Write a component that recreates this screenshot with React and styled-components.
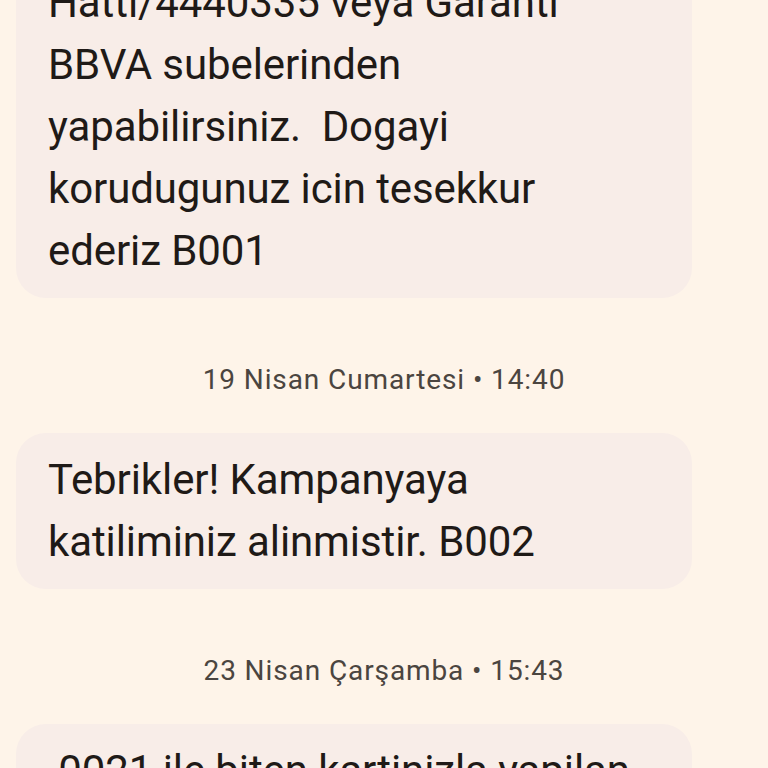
import React from "react";
import styled, { createGlobalStyle } from "styled-components";

const GlobalStyle = createGlobalStyle`
  html, body {
    margin: 0;
    padding: 0;
    background: #fef4e9;
    overflow: hidden;
  }
  body {
    font-family: Roboto, "Noto Sans", "Liberation Sans", sans-serif;
  }
`;

const Screen = styled.div`
  width: 768px;
  height: 768px;
  overflow: hidden;
  background: #fef4e9;
`;

const Thread = styled.div`
  display: flex;
  flex-direction: column;
  align-items: flex-start;
  padding: 0 16px;
  margin-top: ${(p) => p.$scroll}px;
`;

const Bubble = styled.div`
  box-sizing: border-box;
  width: 676px;
  padding: 16px 32px;
  border-radius: 30px;
  background: #f8ede8;
  color: #1f1a17;
  font-size: 42px;
  line-height: 62px;
  letter-spacing: -0.1px;
  white-space: pre-wrap;
`;

const DateLabel = styled.div`
  align-self: stretch;
  margin: 62px 0 33px;
  text-align: center;
  font-size: 28px;
  line-height: 40px;
  letter-spacing: 0.9px;
  color: #4b4540;
`;

const messages = [
  {
    date: null,
    text: "Hatti/4440335 veya Garanti\nBBVA subelerinden\nyapabilirsiniz.  Dogayi\nkorudugunuz icin tesekkur\nederiz B001",
  },
  {
    date: "19 Nisan Cumartesi \u2022 14:40",
    text: "Tebrikler! Kampanyaya\nkatiliminiz alinmistir. B002",
  },
  {
    date: "23 Nisan \u00C7ar\u015Famba \u2022 15:43",
    text: "\u00A00021 ile biten kartinizla yapilan\nalisverisiniz",
  },
];

export default function App() {
  return (
    <Screen>
      <GlobalStyle />
      <Thread $scroll={-44}>
        {messages.map((m, i) => (
          <React.Fragment key={i}>
            {m.date && <DateLabel>{m.date}</DateLabel>}
            <Bubble>{m.text}</Bubble>
          </React.Fragment>
        ))}
      </Thread>
    </Screen>
  );
}
